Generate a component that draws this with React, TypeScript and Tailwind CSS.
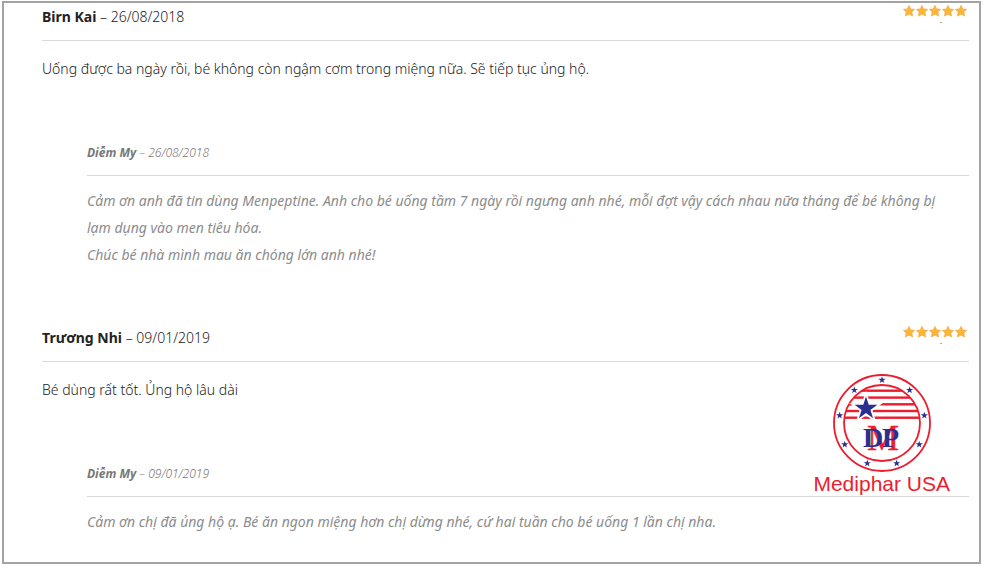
import React from 'react';

interface Entry {
  author: string;
  date: string;
  lines: string[];
}

interface Review extends Entry {
  id: number;
  rating: number;
  reply: Entry;
}

const reviews: Review[] = [
  {
    id: 1,
    author: 'Birn Kai',
    date: '26/08/2018',
    rating: 5,
    lines: ['Uống được ba ngày rồi, bé không còn ngậm cơm trong miệng nữa. Sẽ tiếp tục ủng hộ.'],
    reply: {
      author: 'Diễm My',
      date: '26/08/2018',
      lines: [
        'Cảm ơn anh đã tin dùng Menpeptine. Anh cho bé uống tầm 7 ngày rồi ngưng anh nhé, mỗi đợt vậy cách nhau nữa tháng để bé không bị lạm dụng vào men tiêu hóa.',
        'Chúc bé nhà mình mau ăn chóng lớn anh nhé!',
      ],
    },
  },
  {
    id: 2,
    author: 'Trương Nhi',
    date: '09/01/2019',
    rating: 5,
    lines: ['Bé dùng rất tốt. Ủng hộ lâu dài'],
    reply: {
      author: 'Diễm My',
      date: '09/01/2019',
      lines: ['Cảm ơn chị đã ủng hộ ạ. Bé ăn ngon miệng hơn chị dừng nhé, cứ hai tuần cho bé uống 1 lần chị nha.'],
    },
  },
];

const STAR_POINTS = '0,-9 2.9,-3.3 9,-2.6 4.6,1.7 5.8,8 0,5 -5.8,8 -4.6,1.7 -9,-2.6 -2.9,-3.3';
const BADGE_STAR_POINTS = '0,-10 2.3,-3.1 9.5,-3.1 3.7,1.2 5.9,8.1 0,3.8 -5.9,8.1 -3.7,1.2 -9.5,-3.1 -2.3,-3.1';

// Small stars on the ring of the badge
const ringStars = Array.from({ length: 9 }, (_, i) => {
  const angle = (i * 40 * Math.PI) / 180;
  return { x: 49 + 43 * Math.sin(angle), y: 49 - 43 * Math.cos(angle) };
});

const Rating: React.FC<{ value: number }> = ({ value }) => (
  <div className="mr-0.5 flex flex-col items-center">
    <div className="flex gap-px" role="img" aria-label={`${value}/5`}>
      {Array.from({ length: value }, (_, i) => (
        <svg key={i} viewBox="-9.5 -9.5 19 19" className="size-3">
          <polygon
            points={STAR_POINTS}
            fill="#fbb635"
            stroke="#f2a94b"
            strokeWidth="1"
            strokeLinejoin="round"
          />
        </svg>
      ))}
    </div>
    <span className="pl-3 text-[10px] leading-1 text-black">.</span>
  </div>
);

const BrandBadge: React.FC = () => (
  <div className="absolute right-[29px] bottom-[66px] flex flex-col items-center">
    <svg viewBox="0 0 98 98" className="size-[98px]" aria-hidden="true">
      <defs>
        <clipPath id="inner">
          <circle cx="49" cy="49" r="38" />
        </clipPath>
      </defs>
      <circle cx="49" cy="49" r="48" fill="#fff" stroke="#ed1c2e" strokeWidth="1.8" />
      <g clipPath="url(#inner)" fill="#ed1c2e">
        <rect x="0" y="15.5" width="98" height="2.4" />
        <rect x="0" y="22.4" width="98" height="2.4" />
        <rect x="0" y="29.1" width="98" height="2.4" />
        <rect x="0" y="35.8" width="98" height="2.4" />
        <rect x="0" y="42.5" width="98" height="2.4" />
      </g>
      <circle cx="49" cy="49" r="38" fill="none" stroke="#ed1c2e" strokeWidth="1.8" />
      <polygon
        points={BADGE_STAR_POINTS}
        transform="translate(33 34.5) scale(1.2)"
        fill="#2b2f8f"
        stroke="#fff"
        strokeWidth="3"
        style={{ paintOrder: 'stroke' }}
      />
      {ringStars.map((star) => (
        <polygon
          key={`${star.x}`}
          points={BADGE_STAR_POINTS}
          transform={`translate(${star.x} ${star.y}) scale(0.38)`}
          fill="#2b2f8f"
        />
      ))}
      <g fontFamily="Liberation Serif, serif">
        <text x="34" y="76" fontSize="36" fill="#ed1c2e" stroke="#ed1c2e" strokeWidth="0.4">M</text>
        <text x="30" y="73" fontSize="28" fontWeight="bold" fill="#2b2f8f">D</text>
        <text x="49" y="73" fontSize="28" fontWeight="bold" fill="#2b2f8f">P</text>
      </g>
    </svg>
    <span className="font-['Liberation_Sans',sans-serif] text-[21px] leading-6 text-[#ed1c2e]">
      Mediphar USA
    </span>
  </div>
);

const Reply: React.FC<{ reply: Entry }> = ({ reply }) => (
  <article className="ml-[45px] text-[#777] italic">
    <header className="flex h-12 items-center border-b border-[#d9d9d9] pt-0.5 text-xs font-light">
      <p>
        <strong className="font-bold">{reply.author}</strong> – {reply.date}
      </p>
    </header>
    <div className="pt-[11px] pr-4 text-sm text-[#8c8c8c]">
      {reply.lines.map((line) => (
        <p key={line} className="leading-[27px]">{line}</p>
      ))}
    </div>
  </article>
);

const ReviewItem: React.FC<{ review: Review }> = ({ review }) => (
  <li className="flex flex-col gap-[46px]">
    <article>
      <header className="flex h-9 items-start justify-between border-b border-[#d9d9d9] text-sm font-light text-[#222]">
        <p className="leading-6">
          <strong className="font-bold">{review.author}</strong> – {review.date}
        </p>
        <Rating value={review.rating} />
      </header>
      <div className="pt-[14px] text-sm font-light text-[#222]">
        {review.lines.map((line) => (
          <p key={line} className="leading-[27px]">{line}</p>
        ))}
      </div>
    </article>
    <Reply reply={review.reply} />
  </li>
);

const App: React.FC = () => {
  return (
    <main className="bg-white pt-px pr-[3px] pb-0.5 pl-0.5 font-['Noto_Sans',sans-serif]">
      <section className="relative border-2 border-[#a3a3a3] pt-0.5 pr-2.5 pb-[27px] pl-[38px]">
        <ul className="flex flex-col gap-[58px]">
          {reviews.map((review) => (
            <ReviewItem key={review.id} review={review} />
          ))}
        </ul>
        <BrandBadge />
      </section>
    </main>
  );
};

export default App;
